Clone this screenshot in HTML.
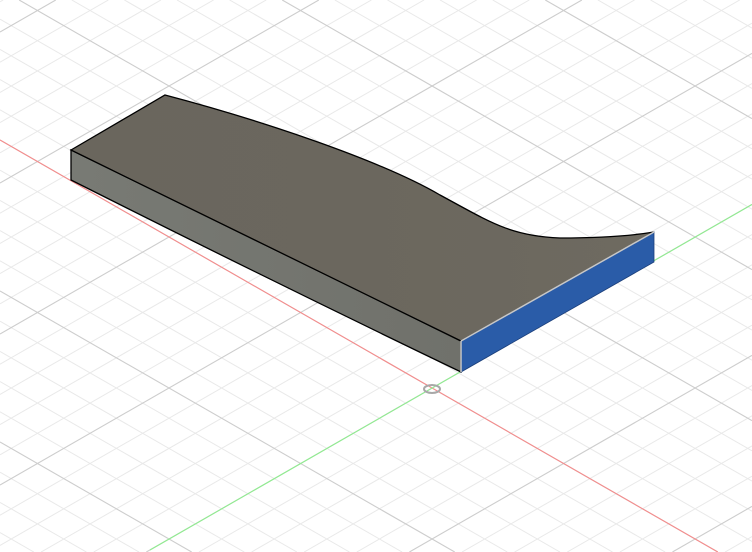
<!DOCTYPE html>
<html><head><meta charset="utf-8"><style>html,body{margin:0;padding:0;background:#fff;overflow:hidden;width:752px;height:552px}svg{display:block;position:absolute;left:0;top:0;overflow:hidden}</style></head>
<body>
<svg id="s" width="752" height="552" viewBox="0 0 752 552" xmlns="http://www.w3.org/2000/svg">
<defs>
<linearGradient id="top" x1="0" y1="0" x2="1" y2="0">
<stop offset="0" stop-color="#6a665d"/><stop offset="0.5" stop-color="#6b675e"/><stop offset="1" stop-color="#6e6a60"/>
</linearGradient>
<linearGradient id="side" x1="0" y1="0" x2="1" y2="0">
<stop offset="0" stop-color="#787a74"/><stop offset="1" stop-color="#70716b"/>
</linearGradient>
</defs>
<g id="grid"></g>
<line x1="0" y1="140" x2="717.8" y2="552" stroke="#f58c8c" stroke-width="1.1"/>
<line x1="150" y1="550" x2="752" y2="204.5" stroke="#90ec90" stroke-width="1.1"/>
<ellipse cx="432" cy="389" rx="8" ry="4" fill="none" stroke="#a8a8a8" stroke-width="2"/>
<polygon points="71,150 71,180 78,184 78,154" fill="#75776f"/>
<path d="M71,150 C200,214 330,278 461,341 L461,372 C330,309 200,245 71,180 Z" fill="url(#side)" stroke="#000" stroke-width="1.3"/>
<path d="M71,150 L165,95 C260,120 380,160 440,195 C490,222 510,236 560,238 C600,238 630,236 654,232 L461,341 C330,278 200,214 71,150 Z" fill="url(#top)" stroke="#000" stroke-width="1.3"/>
<polygon points="461,341 654,232 654,262 461,372" fill="#2a5ca8" stroke="#1c3f7a" stroke-width="0.8"/>
<line x1="461" y1="341" x2="654" y2="232" stroke="#c8c8c8" stroke-width="1.5"/>
<line x1="461" y1="341" x2="461" y2="372" stroke="#c8c8c8" stroke-width="1.5"/>
</svg>
<script>
var g=document.getElementById('grid'),ns='http://www.w3.org/2000/svg',d=30.2,s=0.574,W=752,H=552;
function L(y0,m,maj){
 // line y = y0 + m x, clip to [0,W]x[0,H]
 var xa=0,xb=W;
 var xt=(0-y0)/m, xh=(H-y0)/m;
 var lo=Math.min(xt,xh), hi=Math.max(xt,xh);
 xa=Math.max(xa,lo); xb=Math.min(xb,hi);
 if(xb<=xa)return;
 var l=document.createElementNS(ns,'line');
 l.setAttribute('x1',xa);l.setAttribute('y1',y0+m*xa);l.setAttribute('x2',xb);l.setAttribute('y2',y0+m*xb);
 l.setAttribute('stroke',maj?'#cdcdcd':'#e9e9e9');l.setAttribute('stroke-width',maj?1.1:1);g.appendChild(l);}
for(var p=0;p<2;p++)for(var k=-40;k<=40;k++){var maj=(k%5===0);if(maj!==(p===1))continue;
L(140+k*d,s,maj); L(636+k*d,-s,maj);}
</script>
</body></html>
